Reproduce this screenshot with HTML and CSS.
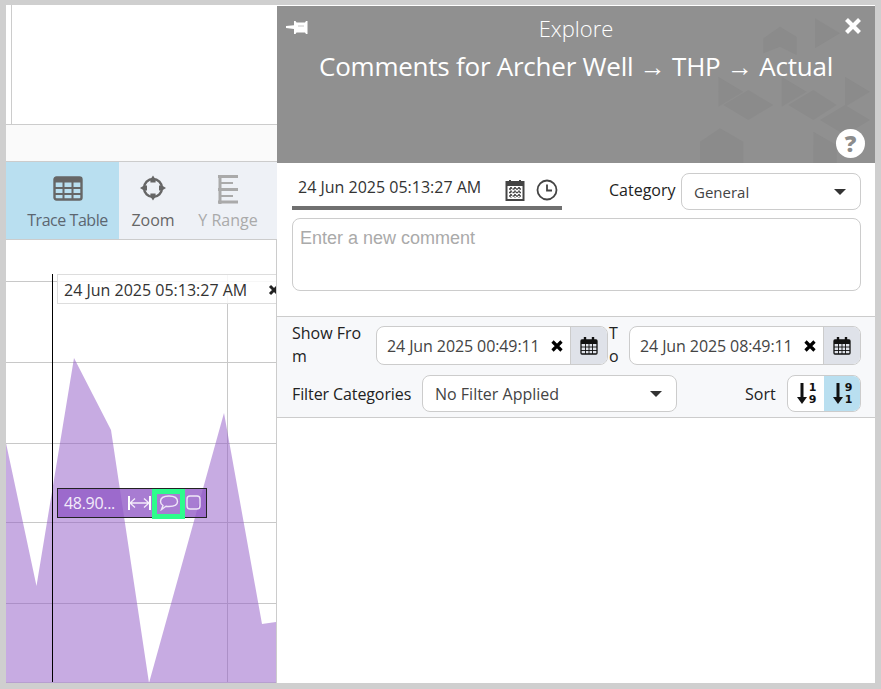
FILE: index.html
```html
<!DOCTYPE html>
<html lang="en">
<head>
<meta charset="utf-8">
<title>Comments for Archer Well</title>
<link rel="stylesheet" href="styles.css">
</head>
<body>
<div class="app">
  <section class="left">
    <div class="blank"><div class="blank-inner"></div></div>
    <div class="strip"></div>
    <div class="toolbar">
      <div class="tool tool-active">
        <svg class="tool-icon" width="30" height="26" viewBox="0 0 30 26"><rect x="1.500" y="2.500" width="27" height="22" rx="2" fill="none" stroke="#666" stroke-width="2.400"/><rect x="1.500" y="2.500" width="27" height="5" fill="#666"/><path d="M1.500 13h27M1.500 19h27M10.500 7v17M19.500 7v17" stroke="#666" stroke-width="2"/></svg>
        <span>Trace Table</span>
      </div>
      <div class="tool tool-zoom">
        <svg class="tool-icon" width="30" height="26" viewBox="0 0 30 26"><circle cx="15" cy="13" r="9" fill="none" stroke="#666" stroke-width="2.400"/><path d="M15 0.500l2.600 4v3h-5.200v-3zM15 25.500l-2.600-4v-3h5.200v3zM2 13l4-2.600h3v5.200h-3zM28 13l-4 2.600h-3v-5.200h3z" fill="#666"/></svg>
        <span>Zoom</span>
      </div>
      <div class="tool tool-range">
        <svg class="tool-icon" width="30" height="30" viewBox="0 0 30 30"><path d="M7 1v29" stroke="#aaa" stroke-width="3"/><path d="M5 2.500h20M5 15.500h20M5 28h20" stroke="#aaa" stroke-width="3"/><path d="M7 9h13M7 22h13" stroke="#aaa" stroke-width="2"/></svg>
        <span>Y Range</span>
      </div>
    </div>
    <div class="chart">
      <svg class="plot" width="270" height="443" viewBox="0 0 270 443">
        <path d="M0 41.500H270M0 122.500H270M0 203.500H270M0 282.500H270M0 363.500H270M221.500 34V443" stroke="#c8c8c8" stroke-width="1" fill="none"/>
        <path d="M0 203L30.500 346L68 118L105 190L143 443L218 173L256 384L270 382V443H0Z" fill="#8f57c5" fill-opacity=".5"/>
        <path d="M46.500 34V443" stroke="#000" stroke-width="1"/>
        <path d="M0 442.500H270" stroke="#b79fd0"/>
      </svg>
      <div class="time-label"><span>24 Jun 2025 05:13:27 AM</span><svg class="x-icon" width="12" height="12" viewBox="0 0 12 12"><path d="M2 2l8 8M10 2l-8 8" stroke="#222" stroke-width="3"/></svg></div>
      <div class="value-tip">
        <span class="value-text">48.90...</span>
        <svg class="tip-range" width="23" height="16" viewBox="0 0 23 16"><path d="M1 1v14M22 1v14" stroke="#fff" stroke-width="2"/><path d="M2 8h19M7 3.500L2 8l5 4.500M16 3.500L21 8l-5 4.500" stroke="#f3ecfa" stroke-width="1.300" fill="none"/></svg>
        <div class="tip-comment"><svg width="20" height="16" viewBox="0 0 20 16"><path d="M10 1c5 0 8.500 2 8.500 5.500S15 11.500 10 11.500c-1 0-2 0-3-.2L2.500 14.500 4 10.500C2.300 9.500 1.500 8 1.500 6.500 1.500 3 5 1 10 1z" fill="none" stroke="#efe6f8" stroke-width="1.400"/></svg></div>
        <svg class="tip-square" width="15" height="15" viewBox="0 0 15 15"><rect x="1" y="1" width="13" height="13" rx="3" fill="none" stroke="#efe6f8" stroke-width="1.400"/></svg>
      </div>
    </div>
  </section>

  <section class="panel">
    <header class="head">
      <svg class="head-pattern" width="176" height="160" viewBox="0 0 528 480">
        <g fill="#8b8b8b">
          <path d="M190 100L240 65L290 95V150L240 125L190 145Z"/>
          <path d="M345 40L420 85L345 130Z"/>
          <path d="M55 215L130 260L55 305Z"/>
          <path d="M70 300L145 255L220 300L145 345Z"/>
          <path d="M245 215L320 260L245 305Z"/>
          <path d="M265 300L340 255L410 300L340 345Z"/>
          <path d="M435 215L510 260L435 305Z"/>
          <path d="M0 410L60 370L130 410V480H0Z"/>
          <path d="M340 380L410 420V480H340Z"/>
          <path d="M360 345L435 300L510 345L435 390Z"/>
        </g>
      </svg>
      <svg class="pin" width="22" height="16" viewBox="0 0 22 16"><path d="M0 7l8-.8V2h1.500l1 1.500H19l1-1.500h1.500v13H20l-1-1.500h-8.500L9.500 15H8V10L0 9z" fill="#fff"/><path d="M12 7h6" stroke="#c4c4c4" stroke-width="1"/></svg>
      <svg class="close" width="20" height="20" viewBox="0 0 20 20"><path d="M3.500 3.500l13 13M16.500 3.500l-13 13" stroke="#fff" stroke-width="4.200"/></svg>
      <div class="head-kicker">Explore</div>
      <h1 class="head-title">Comments for Archer Well → THP → Actual</h1>
      <div class="help">?</div>
    </header>

    <form class="compose">
      <div class="compose-top">
        <div class="stamp">
          <span class="stamp-text">24 Jun 2025 05:13:27 AM</span>
          <svg class="stamp-cal" width="20" height="22" viewBox="0 0 20 22"><rect x="1.500" y="3" width="17" height="18" fill="none" stroke="#444" stroke-width="2"/><rect x="1.500" y="3" width="17" height="4" fill="#444"/><path d="M5 1v3M15 1v3" stroke="#444" stroke-width="2"/><path d="M4 10h12M4 13.500h12M4 17h12M6 8v11M10 8v11M14 8v11" stroke="#444" stroke-width="1.700" stroke-dasharray="2 1.500"/></svg>
          <svg class="stamp-clock" width="22" height="22" viewBox="0 0 22 22"><circle cx="11" cy="11" r="9.500" fill="none" stroke="#444" stroke-width="1.800"/><path d="M11 5.500V11.500H16" fill="none" stroke="#444" stroke-width="1.800"/></svg>
        </div>
        <label class="cat-label">Category</label>
        <div class="select select-cat"><span class="select-general">General</span><i class="caret"></i></div>
      </div>
      <div class="comment-box">Enter a new comment</div>
    </form>

    <div class="filters">
      <div class="filter-row">
        <span class="lbl lbl-from">Show From</span>
        <div class="date-field">
          <span class="date-value">24 Jun 2025 00:49:11</span>
          <svg class="x-small" width="14" height="14" viewBox="0 0 14 14"><path d="M2.500 2.500l9 9M11.500 2.500l-9 9" stroke="#000" stroke-width="3.200"/></svg>
          <span class="date-addon"><svg width="18" height="18" viewBox="0 0 18 18"><use href="#cal"/></svg></span>
        </div>
        <span class="lbl lbl-to">To</span>
        <div class="date-field">
          <span class="date-value">24 Jun 2025 08:49:11</span>
          <svg class="x-small" width="14" height="14" viewBox="0 0 14 14"><path d="M2.500 2.500l9 9M11.500 2.500l-9 9" stroke="#000" stroke-width="3.200"/></svg>
          <span class="date-addon"><svg width="18" height="18" viewBox="0 0 18 18"><use href="#cal"/></svg></span>
        </div>
      </div>
      <div class="filter-row filter-row-2">
        <span class="lbl lbl-cat">Filter Categories</span>
        <div class="select select-filter"><span>No Filter Applied</span><i class="caret"></i></div>
        <span class="lbl lbl-sort">Sort</span>
        <div class="sort-group">
          <div class="sort-btn"><svg width="12" height="23" viewBox="0 0 12 23"><path d="M6 1v17" stroke="#111" stroke-width="3"/><path d="M1 15h10l-5 7z" fill="#111"/></svg><span class="digits">1<br>9</span></div>
          <div class="sort-btn sort-on"><svg width="12" height="23" viewBox="0 0 12 23"><path d="M6 1v17" stroke="#111" stroke-width="3"/><path d="M1 15h10l-5 7z" fill="#111"/></svg><span class="digits">9<br>1</span></div>
        </div>
      </div>
    </div>
    <div class="list"></div>
  </section>
</div>
<svg class="defs" width="0" height="0"><defs><g id="cal"><rect x="1" y="3" width="16" height="14" rx="1" fill="none" stroke="#111" stroke-width="1.300"/><path d="M1 3h16v4H1z" fill="#111"/><path d="M5 .5v4M13 .5v4" stroke="#111" stroke-width="2.400" stroke-linecap="round"/><path d="M1 10h16M1 13.500h16M5.500 7v10M9 7v10M12.500 7v10" stroke="#111" stroke-width=".9"/></g></defs></svg>
</body>
</html>
```
FILE: styles.css
```css
* { box-sizing: border-box; }
html, body { margin: 0; height: 100%; }
body {
  background: #cfcfcf;
  padding: 5px 6px 6px;
  font-family: "Open Sans", "Noto Sans", sans-serif;
  font-size: 16px;
  color: #333;
  overflow: hidden;
}
.app { display: flex; width: 869px; height: 678px; background: #fff; }
.defs { position: absolute; }

/* left column */
.left { width: 271px; flex: none; display: flex; flex-direction: column; }
.blank { height: 120px; padding-left: 5px; border-bottom: 1px solid #ccc; background: #fff; flex: none; }
.blank-inner { height: 100%; border-left: 1px solid #ccc; }
.strip { height: 37px; flex: none; background: #fafafa; border-bottom: 1px solid #ccc; }
.toolbar { height: 78px; flex: none; display: flex; background: #eef1f6; border-bottom: 1px solid #ccc; }
.tool { display: flex; flex-direction: column; align-items: center; color: #666; padding-top: 13px; }
.tool-icon { display: block; flex: none; }
.tool span { margin-top: 8px; line-height: 22px; white-space: nowrap; }
.tool-active { width: 113px; padding-left: 10px; background: #b9dff0; color: #5c6670; }
.tool-active span { letter-spacing: -.45px; }
.tool-zoom { width: 68px; }
.tool-range { width: 82px; color: #aaa; padding-top: 12px; }
.tool-range span { margin-top: 5px; }

.chart { flex: 1; position: relative; overflow: hidden; border-right: 1px solid #ccc; }
.plot { display: block; }
.time-label {
  position: absolute; left: 51px; top: 34px; width: 230px; height: 30px;
  border: 1px solid #ddd; background: rgba(255,255,255,.85);
  display: flex; align-items: center; padding: 1px 0 0 6px; color: #333; white-space: nowrap;
}
.x-icon { margin-left: 21px; flex: none; }
.value-tip {
  position: absolute; left: 51px; top: 248px; width: 150px; height: 30px;
  border: 1px solid #222; background: rgba(143,87,197,.78);
  display: flex; align-items: flex-start; color: #f3ecfa;
}
.value-text { margin: 4px 0 0 6px; width: 64px; line-height: 20px; letter-spacing: -.3px; }
.tip-range { margin-top: 6px; flex: none; }
.tip-comment { width: 33px; height: 30px; margin-left: 1px; border: 5px solid #2efc8c; display: flex; align-items: center; justify-content: center; flex: none; padding-bottom: 3px; }
.tip-square { margin: 6px 0 0 1px; flex: none; }

/* panel */
.panel { flex: 1; min-width: 0; display: flex; flex-direction: column; background: #fff; }
.head { position: relative; margin-top: 1px; height: 157px; flex: none; background: #909090; color: #fff; text-align: center; overflow: hidden; }
.head-pattern { position: absolute; right: -1px; top: -1px; }
.pin { position: absolute; left: 9px; top: 13px; }
.close { position: absolute; right: 12px; top: 10px; }
.head-kicker { position: relative; padding-top: 6px; font-size: 22px; font-weight: 300; line-height: 32px; }
.head-title { position: relative; margin: 2px 0 0; font-size: 26px; font-weight: 400; line-height: 40px; letter-spacing: -.24px; white-space: nowrap; }
.help { position: absolute; right: 10px; bottom: 5px; width: 29px; height: 29px; border-radius: 50%; background: #fff; color: #8c8c8c; font-size: 23px; font-weight: 800; line-height: 29px; text-align: center; }

.compose { height: 153px; flex: none; padding: 10px 14px 0 15px; }
.compose-top { display: flex; height: 45px; }
.stamp { width: 270px; height: 37px; border-bottom: 4px solid #707070; display: flex; align-items: center; padding: 0 0 6px 6px; flex: none; }
.stamp-text { width: 207px; color: #333; white-space: nowrap; }
.stamp-cal { flex: none; margin-top: 6px; }
.stamp-clock { flex: none; margin-left: 11px; margin-top: 6px; }
.cat-label { margin-left: 47px; width: 72px; color: #222; line-height: 34px; white-space: nowrap; }
.select { display: flex; align-items: center; justify-content: space-between; background: #fff; border: 1px solid #ccc; border-radius: 8px; padding: 0 14px 0 12px; color: #444; }
.select-cat { width: 180px; height: 37px; flex: none; }
.select-general { font-size: 15px; }
.caret { width: 0; height: 0; border: 6px solid transparent; border-top: 6px solid #333; border-bottom: 0; flex: none; }
.comment-box { height: 73px; border: 1px solid #ccc; border-radius: 8px; padding: 8px 7px; font-family: "Liberation Sans", Arial, sans-serif; font-size: 18px; line-height: 22px; color: #aaa; }

.filters { height: 102px; flex: none; background: #f7f8fa; border-top: 1px solid #ccc; border-bottom: 1px solid #ccc; padding: 9px 14px 0 15px; }
.filter-row { display: flex; height: 39px; align-items: center; }
.filter-row-2 { margin-top: 10px; height: 37px; }
.lbl { color: #222; flex: none; }
.lbl-from { width: 84px; padding-right: 12px; line-height: 23px; word-break: break-all; margin-top: -1px; }
.lbl-to { width: 21px; padding: 0 8px 0 1px; line-height: 23px; word-break: break-all; margin-top: -1px; }
.date-field { width: 232px; height: 39px; flex: none; display: flex; align-items: center; background: #fff; border: 1px solid #ccc; border-radius: 8px; overflow: hidden; }
.date-value { margin-left: 10px; width: 163px; color: #444; letter-spacing: -.1px; white-space: nowrap; }
.x-small { flex: none; }
.date-addon { margin-left: auto; width: 37px; height: 100%; background: #dfe2e9; border-left: 1px solid #ccc; display: flex; align-items: center; justify-content: center; }
.lbl-cat { width: 130px; letter-spacing: -.1px; white-space: nowrap; }
.select-filter { width: 255px; height: 37px; flex: none; }
.lbl-sort { margin-left: 68px; width: 42px; }
.sort-group { display: flex; width: 74px; height: 37px; border: 1px solid #ccc; border-radius: 8px; overflow: hidden; background: #fff; }
.sort-btn { flex: 1; display: flex; align-items: center; justify-content: center; gap: 1px; }
.sort-on { background: #b9dff0; }
.digits { font-family: "DejaVu Sans", sans-serif; font-size: 11px; font-weight: 700; line-height: 12px; color: #111; }
.list { flex: 1; background: #fff; }
```
